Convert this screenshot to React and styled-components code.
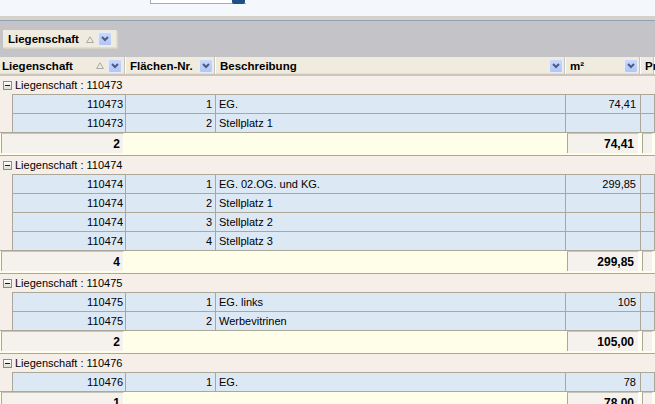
import React from 'react';
import styled, { createGlobalStyle } from 'styled-components';

const GlobalStyle = createGlobalStyle`
  html, body {
    margin: 0;
    padding: 0;
    background: #c4c3c7;
  }
  body {
    font-family: "Liberation Sans", Arial, sans-serif;
    font-size: 11px;
    color: #000;
  }
`;

const Page = styled.div`
  width: 655px;
  height: 404px;
  overflow: hidden;
`;

const TopBar = styled.div`
  height: 16px;
  background: #f4f8fd;
  display: flex;
  align-items: flex-start;
  padding-left: 150px;
`;

const SearchBox = styled.div`
  width: 94px;
  height: 3px;
  background: #fff;
  border-left: 1px solid #a5acb5;
  border-bottom: 1px solid #a5acb5;
  display: flex;
  justify-content: flex-end;
  padding-right: 1px;
`;

const SearchButton = styled.div`
  width: 13px;
  height: 4px;
  background: #1f4f84;
  border-radius: 0 0 2px 2px;
`;

const Band = styled.div`
  height: 4px;
  background: #d6d2ca;
  border-bottom: 1px solid #8ea2b4;
`;

const GroupByArea = styled.div`
  height: 36px;
  background: #c4c3c7;
  padding: 9px 0 0 3px;
  box-sizing: border-box;
`;

const GroupChip = styled.div`
  width: 114px;
  height: 18px;
  box-sizing: border-box;
  background: #efebde;
  box-shadow: 1px 1px 0 #d6d2c4, inset -1px -1px 0 #e2ddcf;
  display: flex;
  align-items: center;
  padding: 0 4px 0 5px;
  font-weight: bold;
  font-size: 11.5px;
`;

const ChipLabel = styled.span`
  flex: 1;
`;

const HeaderRow = styled.div`
  display: grid;
  grid-template-columns: 126px 90px 350px 75px 1fr;
  height: 19px;
  box-sizing: border-box;
  background: #efebde;
  border-bottom: 2px solid #cbc6b9;
  box-shadow: inset 0 -1px 0 #e4e0d4;
`;

const HeaderCell = styled.div`
  display: flex;
  align-items: center;
  padding: 0 2px 0 ${p => p.$first ? 2 : 4}px;
  font-weight: bold;
  font-size: 11.5px;
  white-space: nowrap;
  overflow: hidden;
  box-shadow: inset -1px 0 0 #fff, inset -2px 0 0 #c9c5b8;
  & > span {
    flex: 1;
  }
`;

const DropButton = styled.div`
  width: 14px;
  height: 14px;
  box-sizing: border-box;
  border: 1px solid #e6ecfb;
  border-radius: 2px;
  background: linear-gradient(#c9d8fc, #b2c6f5);
  display: flex;
  align-items: center;
  justify-content: center;
  margin-right: ${p => p.$gap || 1}px;
  flex-shrink: 0;
`;

const SortMark = styled.svg`
  margin-right: 4px;
  flex-shrink: 0;
`;

const Body = styled.div`
  background: #f6eee8;
`;

const GroupHeader = styled.div`
  height: 18px;
  display: flex;
  align-items: center;
  background: #f6eee8;
  padding-left: 3px;
  gap: 3px;
`;

const Toggle = styled.div`
  width: 9px;
  height: 9px;
  box-sizing: border-box;
  border: 1px solid #7d8ea6;
  background: linear-gradient(#ffffff, #dcdcd4);
  display: flex;
  align-items: center;
  justify-content: center;
  &::after {
    content: '';
    width: 5px;
    height: 1px;
    background: #1a1a1a;
  }
`;

const DataRow = styled.div`
  display: grid;
  grid-template-columns: 12px 114px 90px 350px 75px 1fr;
  height: 19px;
`;

const Indent = styled.div`
  background: #f6eee8;
`;

const Cell = styled.div`
  background: #dde8f5;
  border-top: 1px solid #aca899;
  border-right: 1px solid #aca899;
  border-left: ${p => p.$first ? '1px solid #aca899' : 'none'};
  display: flex;
  align-items: center;
  justify-content: ${p => p.$left ? 'flex-start' : 'flex-end'};
  padding: 0 ${p => p.$pr || 2}px 0 3px;
  white-space: nowrap;
  overflow: hidden;
`;

const SummaryRow = styled.div`
  display: grid;
  grid-template-columns: 126px 440px 75px 1fr;
  height: 24px;
  box-sizing: border-box;
  background: #fffee8;
  border-top: 1px solid #aca899;
  border-bottom: 1px solid #aca899;
`;

const SumBox = styled.div`
  margin: 0 2px 2px 1px;
  background: #f5f2ed;
  border-top: 1px solid #c8c4b8;
  border-left: 1px solid #aca899;
  border-right: 1px solid #fff;
  display: flex;
  align-items: center;
  justify-content: flex-end;
  padding-right: ${p => p.$pr || 3}px;
  font-weight: bold;
  font-size: 12px;
`;

const groups = [
  {
    id: '110473',
    rows: [
      { nr: 1, text: 'EG.', area: '74,41' },
      { nr: 2, text: 'Stellplatz 1', area: '' },
    ],
    total: '74,41',
  },
  {
    id: '110474',
    rows: [
      { nr: 1, text: 'EG. 02.OG. und KG.', area: '299,85' },
      { nr: 2, text: 'Stellplatz 1', area: '' },
      { nr: 3, text: 'Stellplatz 2', area: '' },
      { nr: 4, text: 'Stellplatz 3', area: '' },
    ],
    total: '299,85',
  },
  {
    id: '110475',
    rows: [
      { nr: 1, text: 'EG. links', area: '105' },
      { nr: 2, text: 'Werbevitrinen', area: '' },
    ],
    total: '105,00',
  },
  {
    id: '110476',
    rows: [
      { nr: 1, text: 'EG.', area: '78' },
    ],
    total: '78,00',
  },
];

const Chevron = () => (
  <svg width="8" height="6" viewBox="0 0 8 6">
    <polyline points="1,1 4,4 7,1" fill="none" stroke="#4b5b88" strokeWidth="2" />
  </svg>
);

const Triangle = () => (
  <SortMark width="8" height="7" viewBox="0 0 8 7">
    <polygon points="4,0.8 7.4,6.5 0.6,6.5" fill="none" stroke="#a8a8a8" strokeWidth="1" />
  </SortMark>
);

class App extends React.Component {
  renderGroup(group) {
    return (
      <div key={group.id}>
        <GroupHeader>
          <Toggle />
          <span>Liegenschaft : {group.id}</span>
        </GroupHeader>
        {group.rows.map(row => (
          <DataRow key={row.nr}>
            <Indent />
            <Cell $first>{group.id}</Cell>
            <Cell $pr={3}>{row.nr}</Cell>
            <Cell $left>{row.text}</Cell>
            <Cell $pr={4}>{row.area}</Cell>
            <Cell />
          </DataRow>
        ))}
        <SummaryRow>
          <SumBox>{group.rows.length}</SumBox>
          <div />
          <SumBox $pr={4}>{group.total}</SumBox>
          <SumBox />
        </SummaryRow>
      </div>
    );
  }

  render() {
    return (
      <Page>
        <GlobalStyle />
        <TopBar>
          <SearchBox>
            <SearchButton />
          </SearchBox>
        </TopBar>
        <Band />
        <GroupByArea>
          <GroupChip>
            <ChipLabel>Liegenschaft</ChipLabel>
            <Triangle />
            <DropButton $gap={0}><Chevron /></DropButton>
          </GroupChip>
        </GroupByArea>
        <HeaderRow>
          <HeaderCell $first>
            <span>Liegenschaft</span>
            <Triangle />
            <DropButton $gap={2}><Chevron /></DropButton>
          </HeaderCell>
          <HeaderCell>
            <span>Flächen-Nr.</span>
            <DropButton $gap={1}><Chevron /></DropButton>
          </HeaderCell>
          <HeaderCell>
            <span>Beschreibung</span>
            <DropButton $gap={0}><Chevron /></DropButton>
          </HeaderCell>
          <HeaderCell>
            <span>m²</span>
            <DropButton $gap={0}><Chevron /></DropButton>
          </HeaderCell>
          <HeaderCell>
            <span>Preis</span>
          </HeaderCell>
        </HeaderRow>
        <Body>
          {groups.map(g => this.renderGroup(g))}
        </Body>
      </Page>
    );
  }
}

export default App;
